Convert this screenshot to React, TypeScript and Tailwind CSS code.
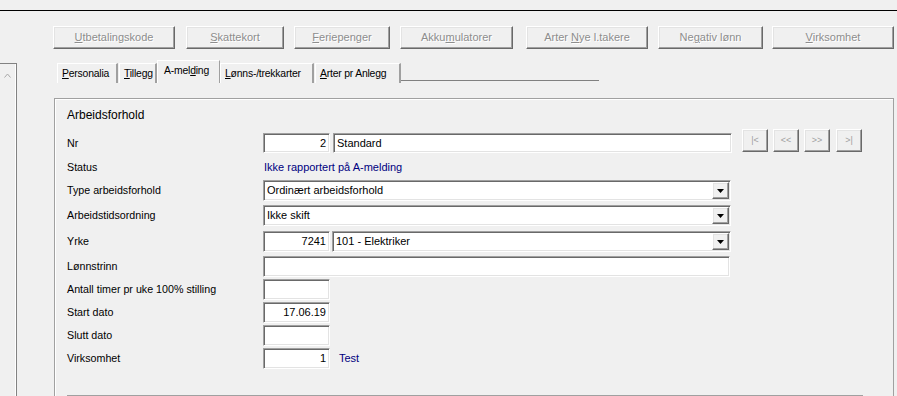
import React from 'react';

const raised =
  'border-t border-l border-t-white border-l-white border-b border-r border-b-[#696969] border-r-[#696969] shadow-[inset_-1px_-1px_0_#a0a0a0,inset_1px_1px_0_#e3e3e3] bg-[#f0f0f0]';
const sunken =
  'border-t border-l border-t-[#a0a0a0] border-l-[#a0a0a0] border-b border-r border-b-white border-r-white shadow-[inset_1px_1px_0_#696969,inset_-1px_-1px_0_#e3e3e3] bg-white';

// Text with one underlined mnemonic letter
function Mn({ pre, key1, post }: { pre?: string; key1: string; post: string }) {
  return (
    <span className="whitespace-nowrap">
      {pre}
      <span className="underline underline-offset-[1px]">{key1}</span>
      {post}
    </span>
  );
}

const buttons = [
  { cls: 'ml-[0px] w-[122px]', label: <Mn key1="U" post="tbetalingskode" /> },
  { cls: 'ml-[11px] w-[98px]', label: <Mn key1="S" post="kattekort" /> },
  { cls: 'ml-[10px] w-[96px]', label: <Mn key1="F" post="eriepenger" /> },
  { cls: 'ml-[10px] w-[113px]', label: <Mn pre="Akku" key1="m" post="ulatorer" /> },
  { cls: 'ml-[13px] w-[122px]', label: <Mn pre="Arter " key1="N" post="ye l.takere" /> },
  { cls: 'ml-[10px] w-[105px]', label: <Mn pre="Ne" key1="g" post="ativ lønn" /> },
  { cls: 'ml-[9px] w-[122px]', label: <Mn key1="V" post="irksomhet" /> },
];

function DropButton() {
  return (
    <div className={`${raised} w-[17px] h-[17px] flex items-center justify-center shrink-0`}>
      <svg width="7" height="4" viewBox="0 0 7 4">
        <polygon points="0,0 7,0 3.5,4" fill="#000" />
      </svg>
    </div>
  );
}

function Select({ value, width }: { value: string; width: string }) {
  return (
    <div className={`${sunken} ${width} h-[21px] flex items-center pl-[3px] pr-[1px]`}>
      <span className="flex-1 truncate">{value}</span>
      <DropButton />
    </div>
  );
}

function Field({ value, width, right }: { value?: string; width: string; right?: boolean }) {
  return (
    <div
      className={`${sunken} ${width} h-full flex items-center px-[3px] ${right ? 'justify-end' : 'justify-start'}`}
    >
      {value}
    </div>
  );
}

function Row({ label, cls, children }: { label: string; cls: string; children?: React.ReactNode }) {
  return (
    <div className={`flex items-center ${cls}`}>
      <div className="w-[196px] shrink-0 text-[10.7px]">{label}</div>
      <div className="flex items-center h-full">{children}</div>
    </div>
  );
}

export default function App() {
  return (
    <div className="w-[897px] h-[396px] overflow-hidden bg-[#f0f0f0] flex flex-col text-[11px] text-black [font-family:'Liberation_Sans',Arial,sans-serif]">
      <div className="h-[11px] border-b border-black shrink-0" />

      <div className="flex flex-1">
        {/* left side list */}
        <div className="w-[17px] pt-[52px] shrink-0 flex flex-col">
          <div className="flex-1 border-t border-r border-[#828282] shadow-[inset_-1px_0_0_#fff] pt-[9px] pl-[4px]">
            <svg width="7" height="5" viewBox="0 0 7 5">
              <polyline points="0.5,4.5 3.5,1 6.5,4.5" fill="none" stroke="#a8a8a8" strokeWidth="1" />
            </svg>
          </div>
        </div>

        <div className="flex-1 flex flex-col">
          {/* action buttons */}
          <div className="flex ml-[36px] mt-[15px]">
            {buttons.map((b, i) => (
              <div
                key={i}
                className={`${raised} ${b.cls} h-[23px] flex items-center justify-center text-[#8d8d8d] [text-shadow:1px_1px_0_#fff]`}
              >
                {b.label}
              </div>
            ))}
          </div>

          {/* tabs */}
          <div className="flex items-end ml-[40px] mt-[12px] h-[22px] text-[10.4px] tracking-[-0.2px]">
            <div className="w-[61px] h-[20px] border-t border-l border-white border-r-2 border-r-[#a0a0a0] flex items-center pl-[4px]">
              <Mn key1="P" post="ersonalia" />
            </div>
            <div className="ml-[1px] w-[38px] h-[20px] border-t border-l border-white border-r-2 border-r-[#a0a0a0] flex items-center pl-[4px]">
              <Mn key1="T" post="illegg" />
            </div>
            <div className="w-[63px] h-[23px] border-t border-l border-white border-r border-r-[#a0a0a0] flex items-start pt-[2px] pl-[6px]">
              <Mn pre="A-mel" key1="d" post="ing" />
            </div>
            <div className="w-[94px] h-[20px] border-t border-l border-white border-r-2 border-r-[#a0a0a0] flex items-center pl-[4px]">
              <Mn key1="L" post="ønns-/trekkarter" />
            </div>
            <div className="ml-[1px] w-[86px] h-[20px] border-t border-l border-white border-r-2 border-r-[#a0a0a0] flex items-center pl-[4px]">
              <Mn key1="A" post="rter pr Anlegg" />
            </div>
            <div className="w-[198px] h-[3px] border-t border-[#808080] self-end" />
          </div>

          {/* group panel */}
          <div className="ml-[37px] mt-[15px] w-[840px] flex-1 border border-[#a0a0a0] border-b-0 shadow-[inset_1px_1px_0_#fff] pl-[12px] pt-[9px] flex flex-col">
            <div className="text-[12px] leading-[14px]">Arbeidsforhold</div>

            <Row label="Nr" cls="mt-[11px] h-[20px]">
              <Field value="2" width="w-[67px]" right />
              <div className="ml-[3px] h-full">
                <Field value="Standard" width="w-[399px]" />
              </div>
              <div className="flex self-start -mt-[4px] ml-[10px]">
                {['|<', '<<', '>>', '>|'].map((t, i) => (
                  <div
                    key={t}
                    className={`${raised} w-[26px] h-[23px] flex items-center justify-center text-[9px] text-[#a0a0a0] ${i === 0 ? '' : i === 3 ? 'ml-[6px]' : 'ml-[5px]'}`}
                  >
                    {t}
                  </div>
                ))}
              </div>
            </Row>

            <Row label="Status" cls="mt-[4px] h-[20px]">
              <span className="pl-[1px] text-[#000080]">Ikke rapportert på A-melding</span>
            </Row>

            <Row label="Type arbeidsforhold" cls="mt-[3px] h-[21px]">
              <Select value="Ordinært arbeidsforhold" width="w-[468px]" />
            </Row>

            <Row label="Arbeidstidsordning" cls="mt-[4px] h-[21px]">
              <Select value="Ikke skift" width="w-[468px]" />
            </Row>

            <Row label="Yrke" cls="mt-[5px] h-[21px]">
              <Field value="7241" width="w-[67px]" right />
              <div className="ml-[2px]">
                <Select value="101 - Elektriker" width="w-[399px]" />
              </div>
            </Row>

            <Row label="Lønnstrinn" cls="mt-[4px] h-[21px]">
              <Field width="w-[467px]" />
            </Row>

            <Row label="Antall timer pr uke 100% stilling" cls="mt-[2px] h-[21px]">
              <Field width="w-[67px]" right />
            </Row>

            <Row label="Start dato" cls="mt-[2px] h-[21px]">
              <Field value="17.06.19" width="w-[67px]" right />
            </Row>

            <Row label="Slutt dato" cls="mt-[2px] h-[21px]">
              <Field width="w-[67px]" right />
            </Row>

            <Row label="Virksomhet" cls="mt-[2px] h-[21px]">
              <Field value="1" width="w-[67px]" right />
              <span className="ml-[9px] text-[#000080]">Test</span>
            </Row>

            <div className="mt-[26px] w-[796px] border-t border-[#a0a0a0]" />
          </div>
        </div>
      </div>
    </div>
  );
}
